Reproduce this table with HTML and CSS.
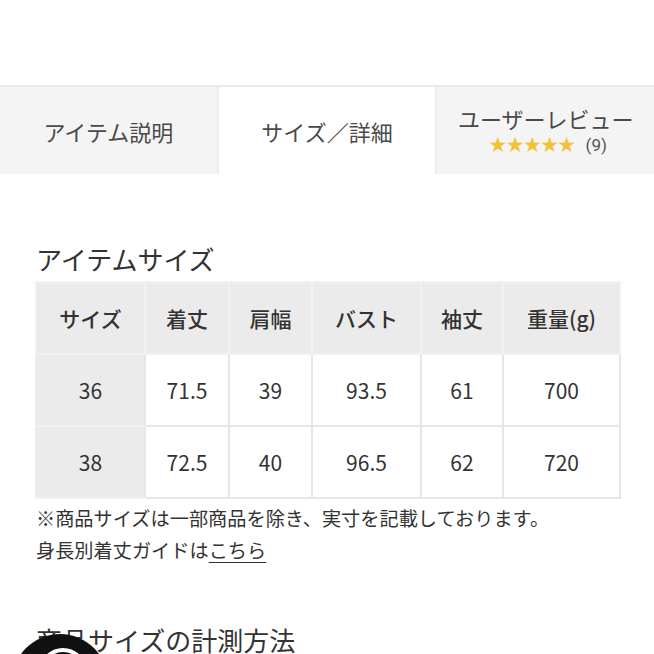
FILE: index.html
```html
<!DOCTYPE html>
<html lang="ja">
<head>
<meta charset="utf-8">
<link rel="stylesheet" href="styles.css">
</head>
<body>
<div class="page">
  <nav class="tabs">
    <div class="tab">アイテム説明</div>
    <div class="tab active">サイズ／詳細</div>
    <div class="tab review">
      <span class="review-title">ユーザーレビュー</span>
      <span class="rating"><span class="stars">★★★★★</span><span class="count">(9)</span></span>
    </div>
  </nav>

  <section class="sizes">
    <h2 class="heading">アイテムサイズ</h2>
    <table class="size-table">
      <colgroup>
        <col class="c1"><col class="c2"><col class="c3"><col class="c4"><col class="c5"><col class="c6">
      </colgroup>
      <thead>
        <tr><th>サイズ</th><th>着丈</th><th>肩幅</th><th>バスト</th><th>袖丈</th><th>重量(g)</th></tr>
      </thead>
      <tbody>
        <tr><th>36</th><td>71.5</td><td>39</td><td>93.5</td><td>61</td><td>700</td></tr>
        <tr><th>38</th><td>72.5</td><td>40</td><td>96.5</td><td>62</td><td>720</td></tr>
      </tbody>
    </table>
    <p class="note">※商品サイズは一部商品を除き、実寸を記載しております。</p>
    <p class="note">身長別着丈ガイドは<a class="link" href="#">こちら</a></p>
  </section>

  <h2 class="heading measure">商品サイズの計測方法</h2>

  <div class="fab"><span class="fab-ring"></span></div>
</div>
</body>
</html>
```

FILE: styles.css
```css
html, body {
  margin: 0;
  padding: 0;
  background: #fff;
}
body {
  font-family: "Noto Sans CJK JP", "Noto Sans", sans-serif;
  color: #333;
  width: 654px;
  height: 654px;
  overflow: hidden;
}
.page {
  position: relative;
  padding-top: 85px;
  height: 569px;
  overflow: hidden;
}
.tabs {
  display: flex;
  border-top: 2px solid #e9e9e9;
  height: 87px;
}
.tab {
  flex: 1;
  background: #f4f4f4;
  display: flex;
  align-items: center;
  justify-content: center;
  font-size: 22px;
  color: #4a4a4a;
}
.tab.active {
  background: #fff;
  border-left: 2px solid #ececec;
  border-right: 2px solid #ececec;
}
.review {
  flex-direction: column;
  gap: 1px;
  padding-bottom: 2px;
}
.review-title {
  line-height: 30px;
}
.rating {
  display: flex;
  align-items: center;
  gap: 11px;
  line-height: 22px;
  margin-left: 4px;
}
.stars {
  color: #f3c234;
  font-family: "DejaVu Sans", sans-serif;
  font-size: 21px;
  letter-spacing: -1.6px;
}
.count {
  font-family: Roboto, "Noto Sans", sans-serif;
  font-size: 17px;
  color: #555;
}
.sizes {
  padding: 0 35px;
}
.heading {
  margin: 68px 0 5px 1px;
  font-size: 26px;
  font-weight: 400;
  line-height: 34px;
  color: #333;
}
.size-table {
  width: 584px;
  border-collapse: collapse;
  table-layout: fixed;
  font-size: 21px;
  border: 2px solid #ececec;
}
.c1 { width: 109px; }
.c2 { width: 84px; }
.c3 { width: 83px; }
.c4 { width: 109px; }
.c5 { width: 82px; }
.c6 { width: 117px; }
.size-table th,
.size-table td {
  height: 70px;
  padding: 0;
  text-align: center;
  font-weight: 500;
  color: #333;
  border: 2px solid #e6e6e6;
}
.size-table td {
  font-weight: 400;
  background: #fff;
}
.size-table thead th {
  background: #ebebeb;
  border-color: #f1f1f1;
}
.size-table tbody th {
  background: #ebebeb;
  font-weight: 400;
  border-color: #ebebeb #e6e6e6 #f1f1f1 #ebebeb;
}
.note {
  margin: 0 0 0 1px;
  font-size: 19.2px;
  line-height: 32px;
  color: #333;
}
.sizes .size-table + .note {
  margin-top: 3px;
}
.link {
  color: #333;
  text-decoration: underline;
  text-underline-offset: 4px;
}
.measure {
  margin: 57px 0 0 36px;
  font-size: 26px;
}
.fab {
  position: absolute;
  left: 12px;
  top: 634px;
  width: 96px;
  height: 96px;
  border-radius: 50%;
  background: #111;
}
.fab-ring {
  position: absolute;
  left: 27px;
  top: 14px;
  width: 40px;
  height: 40px;
  border: 4px solid #fff;
  border-radius: 50%;
}
```
